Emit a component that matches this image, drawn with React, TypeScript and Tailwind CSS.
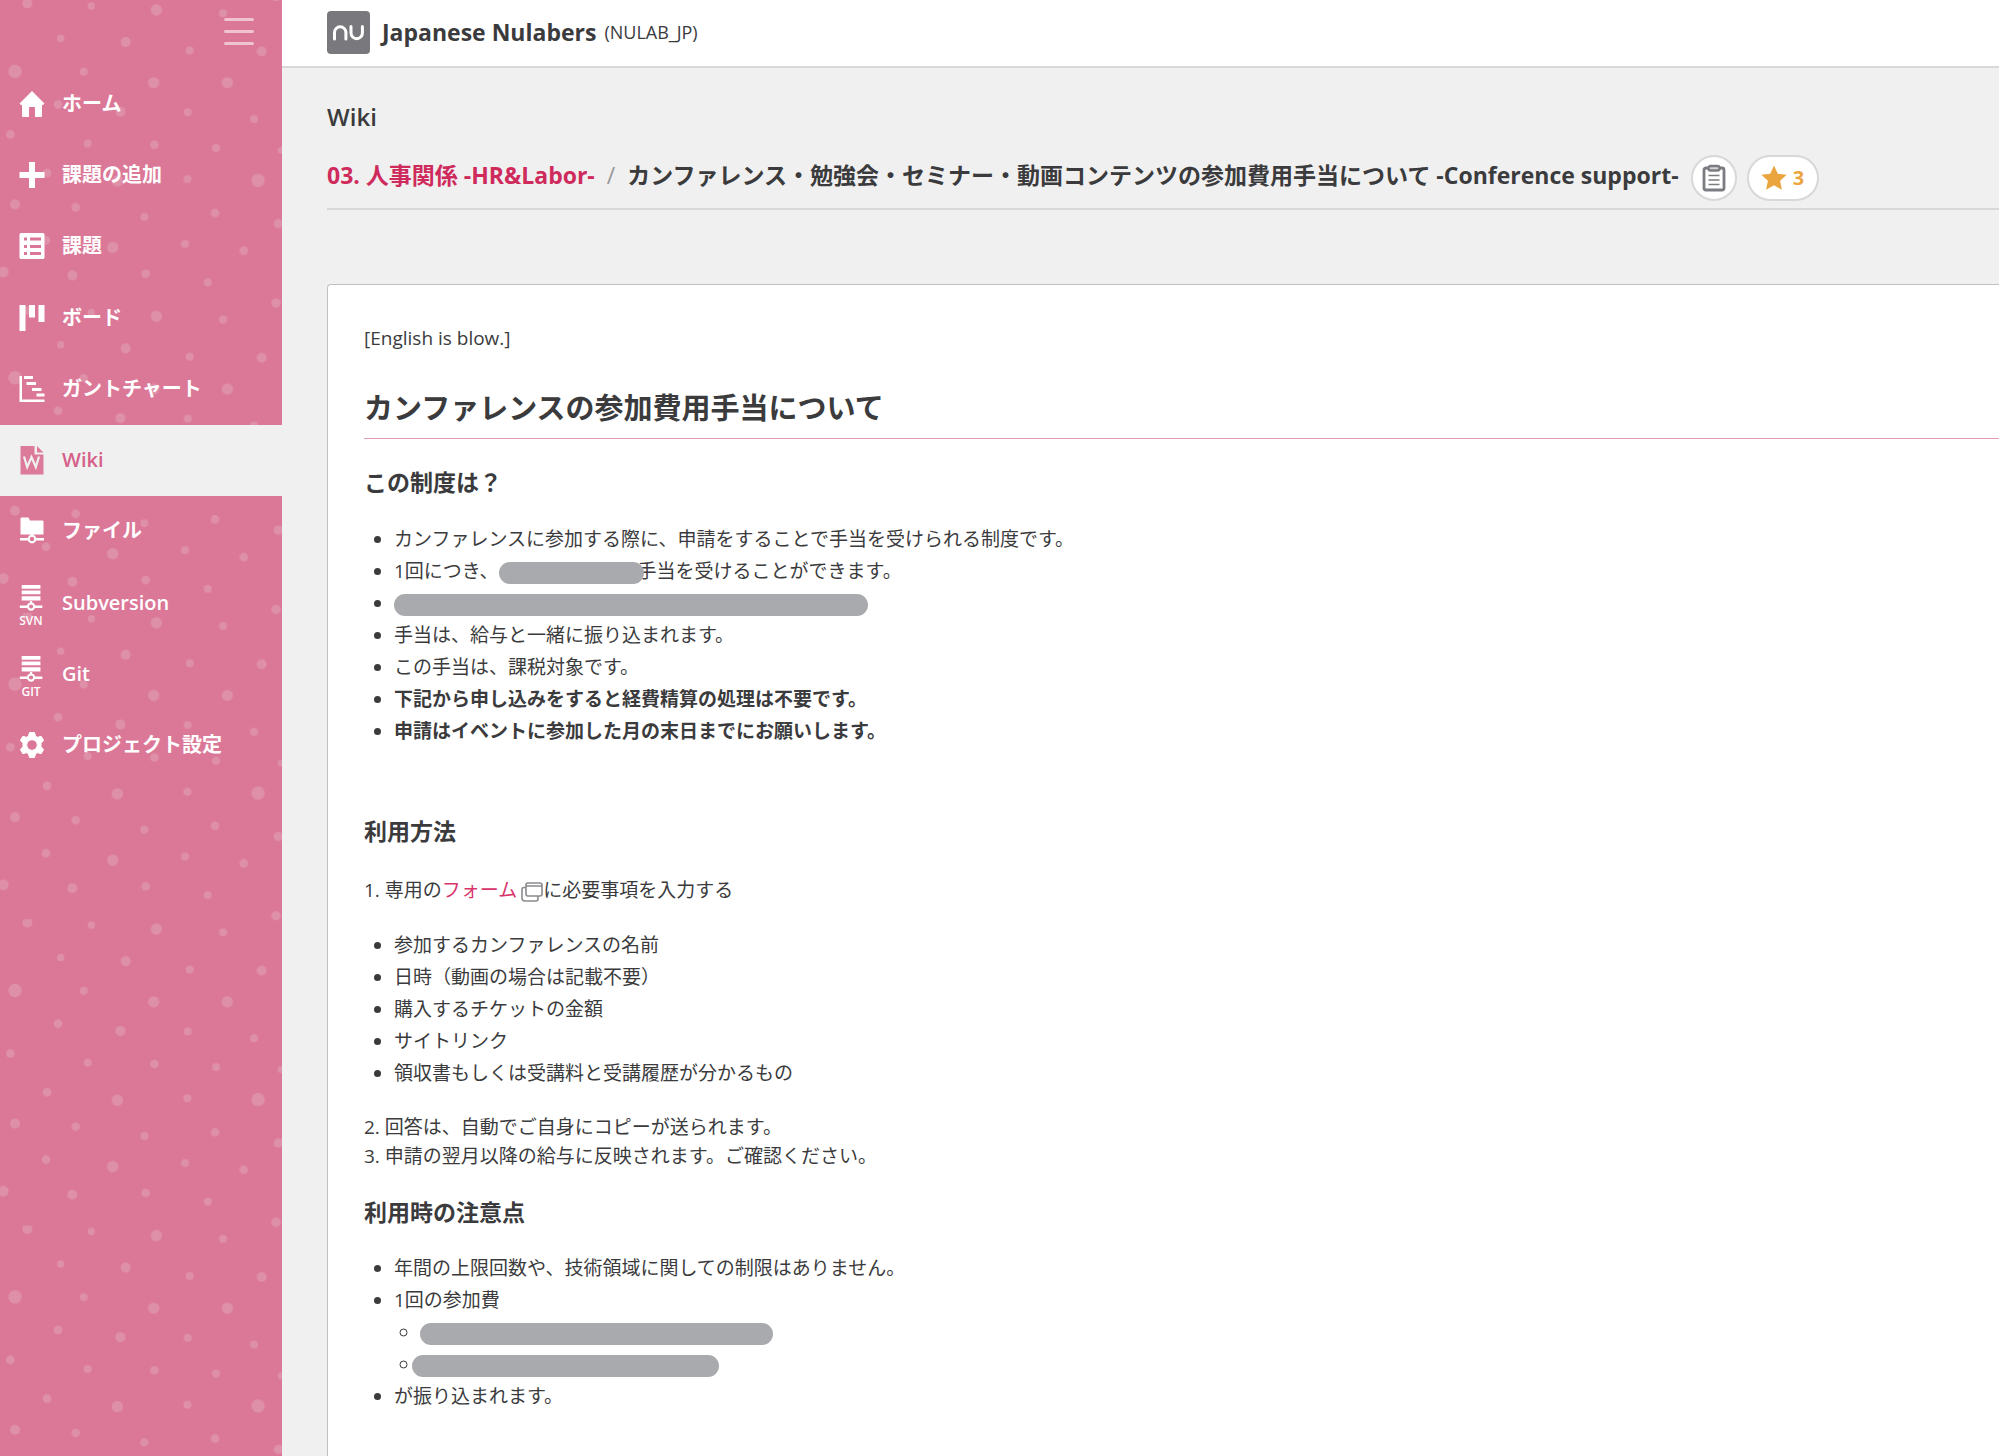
import type { ReactNode } from "react";

const DOTS: [number, number, number][] = [
  [82, 10, 15], [274, 18, 11], [469, 30, 17], [669, 40, 12], [182, 115, 11], [377, 126, 15],
  [569, 151, 12], [785, 154, 15], [45, 214, 20], [251, 215, 12], [461, 248, 17], [682, 248, 17],
  [174, 313, 13], [361, 335, 15], [563, 337, 12], [762, 357, 12], [31, 403, 13], [263, 430, 12],
  [463, 434, 13], [648, 444, 12], [843, 451, 10], [141, 519, 13], [352, 543, 17], [562, 537, 12],
  [774, 541, 20], [45, 613, 15], [227, 622, 13], [433, 650, 12], [645, 639, 13], [835, 671, 14],
  [138, 721, 13], [338, 742, 17], [555, 731, 12], [731, 752, 13], [10, 816, 16], [217, 826, 15],
  [437, 821, 13], [623, 847, 12], [828, 909, 14], [828, -10, 14],
];

function DotBackground() {
  return (
    <svg className="absolute inset-0 h-full w-full" aria-hidden="true">
      <defs>
        <pattern id="dots" width="919" height="919" patternUnits="userSpaceOnUse" patternTransform="scale(0.3334)">
          {DOTS.map(([x, y, r]) => (
            <circle key={`${x}-${y}`} cx={x} cy={y} r={r} fill="#df90a9" />
          ))}
        </pattern>
      </defs>
      <rect width="100%" height="100%" fill="url(#dots)" />
    </svg>
  );
}

function Icon({ children, className = "h-[32px] w-[26px]" }: { children: ReactNode; className?: string }) {
  return (
    <svg viewBox="0 0 26 32" className={className} fill="currentColor" aria-hidden="true">
      {children}
    </svg>
  );
}

const HomeIcon = () => (
  <Icon>
    <path d="M13 3 25.500 15.500 24 17H23V28a1 1 0 0 1-1 1H16V20a1 1 0 0 0-1-1h-4a1 1 0 0 0-1 1v9H4a1 1 0 0 1-1-1V17H2L.5 15.500z" />
  </Icon>
);
const PlusIcon = () => (
  <Icon>
    <path d="M10 3h6v10h9.500v6H16v10h-6V19H.5v-6H10z" />
  </Icon>
);
const ListIcon = () => (
  <Icon>
    <path
      fillRule="evenodd"
      d="M2 3h22a1.500 1.500 0 0 1 1.500 1.500v23A1.500 1.500 0 0 1 24 29H2A1.500 1.500 0 0 1 .5 27.500v-23A1.500 1.500 0 0 1 2 3zM5 7.500v3h3v-3zm6 0v3h11v-3zM5 15v3h3v-3zm6 0v3h11v-3zM5 22v3h3v-3zm6 0v3h11v-3z"
    />
  </Icon>
);
const BoardIcon = () => (
  <Icon>
    <path d="M.5 3h6v26h-6zM10 3h6v12.500h-6zM19.500 3h6v17h-6z" />
  </Icon>
);
const GanttIcon = () => (
  <Icon>
    <path d="M.5 3H3v23.500h22.500V29H.5zM5 3h9v3H5zM7.500 9H17v3H7.500zM13 15h9.500v3H13zM17.500 20.500h8v3h-8z" />
  </Icon>
);
const WikiIcon = () => (
  <Icon>
    <path fill="#dc7a99" d="M1.500 2h14v8.500h9V30.500h-23zM18 2l6.500 6.500H18z" />
    <path d="M5 12.500l3.200 10.500L12.500 13l4.300 10L20 12.500" fill="none" stroke="#f0f0f0" strokeWidth="2.200" />
  </Icon>
);
const Node = () => (
  <>
    <path d="M0 23h8v2.500H0zM16 23h8v2.500h-8zM10.800 18h2.400v3h-2.400z" />
    <circle cx="12" cy="24" r="3.300" fill="none" stroke="currentColor" strokeWidth="2.200" />
  </>
);
const FileIcon = () => (
  <Icon>
    <path d="M1.500 3.500a1 1 0 0 1 1-1h7l1.500 3h12.500a1 1 0 0 1 1 1v13h-23z" />
    <g transform="translate(1 0)">
      <Node />
    </g>
  </Icon>
);
function RepoIcon({ label }: { label: string }) {
  return (
    <span className="flex w-[26px] flex-col items-start pt-1.5">
      <Icon className="h-[30px] w-[26px]">
        <path d="M2 1h20v4H2zM2 7h20v4H2zM2 13h20v4.500H2z" />
        <Node />
      </Icon>
      <span className="w-[24px] text-center text-[12px] font-semibold leading-[14px]">{label}</span>
    </span>
  );
}
const GearIcon = () => (
  <Icon>
    <path
      fillRule="evenodd"
      strokeLinejoin="round"
      stroke="currentColor"
      d="M10.500 3.500h5l1 3.600 2 1.200 3.700-1 2.400 4.200-2.600 2.700v3.600l2.600 2.700-2.400 4.200-3.700-1-2 1.200-1 3.600h-5l-1-3.600-2-1.200-3.700 1-2.400-4.200 2.600-2.700v-3.600l-2.600-2.700 2.400-4.200 3.700 1 2-1.200zM13 10.700a5.300 5.300 0 1 0 0 10.600 5.300 5.300 0 0 0 0-10.600z"
    />
  </Icon>
);

const NAV: { label: string; icon: ReactNode; active?: boolean }[] = [
  { label: "ホーム", icon: <HomeIcon /> },
  { label: "課題の追加", icon: <PlusIcon /> },
  { label: "課題", icon: <ListIcon /> },
  { label: "ボード", icon: <BoardIcon /> },
  { label: "ガントチャート", icon: <GanttIcon /> },
  { label: "Wiki", icon: <WikiIcon />, active: true },
  { label: "ファイル", icon: <FileIcon /> },
  { label: "Subversion", icon: <RepoIcon label="SVN" /> },
  { label: "Git", icon: <RepoIcon label="GIT" /> },
  { label: "プロジェクト設定", icon: <GearIcon /> },
];

function Sidebar() {
  return (
    <aside className="relative w-[282px] shrink-0 bg-[#db7797]">
      <DotBackground />
      <div className="relative">
        <div className="flex h-[68px] justify-end pr-[28px] pt-[18px]">
          <button type="button" aria-label="メニュー" className="flex h-[27px] w-[30px] flex-col justify-between text-[#efc3d0]">
            <span className="h-[3px] w-full rounded bg-current" />
            <span className="h-[3px] w-full rounded bg-current" />
            <span className="h-[3px] w-full rounded bg-current" />
          </button>
        </div>
        <nav className="grid h-[713px] auto-rows-fr">
          {NAV.map((n) => (
            <a
              key={n.label}
              href="#"
              className={
                n.active
                  ? "flex items-center gap-[17px] bg-[#f0f0f0] pl-[19px] text-[20px] font-semibold text-[#d6608a]"
                  : "flex items-center gap-[17px] pl-[19px] text-[20px] font-semibold text-white"
              }
            >
              {n.icon}
              <span>{n.label}</span>
            </a>
          ))}
        </nav>
      </div>
    </aside>
  );
}

function Bar({ className }: { className: string }) {
  return <span className={`relative inline-block h-[22px] rounded-full bg-[#a9aaae] align-middle ${className}`} />;
}

function Bullets({ children }: { children: ReactNode }) {
  return <ul className="list-disc pl-[30px] leading-[32px]">{children}</ul>;
}

function H3({ children }: { children: ReactNode }) {
  return <h3 className="text-[23px] font-bold leading-[32px]">{children}</h3>;
}

export default function App() {
  return (
    <div className="flex h-screen overflow-hidden bg-[#f0f0f0] font-['Open_Sans','Noto_Sans_CJK_JP',sans-serif] text-[19px] text-[#3b3b3d]">
      <Sidebar />
      <div className="flex min-w-0 flex-1 flex-col">
        <header className="flex h-[68px] shrink-0 items-center border-b-2 border-[#d9d7d8] bg-white pb-0.5 pl-[45px]">
          <svg viewBox="0 0 43 43" className="h-[43px] w-[43px]" role="img" aria-label="nu">
            <rect width="43" height="43" rx="4" fill="#79787d" />
            <path
              d="M7.500 28v-6.500a5.700 5.700 0 0 1 11.400 0V28M24 15.500V22a5.700 5.700 0 0 0 11.400 0v-6.500"
              fill="none"
              stroke="#fff"
              strokeWidth="3"
              strokeLinecap="round"
            />
          </svg>
          <span className="ml-3 text-[23px] font-bold">Japanese Nulabers</span>
          <span className="ml-2 text-[18px]">(NULAB_JP)</span>
        </header>
        <main className="flex flex-1 flex-col pl-[45px]">
          <div className="h-[142px] shrink-0 border-b-2 border-[#d9d7d8] pt-[33px]">
            <h1 className="text-[24px] font-semibold leading-[32px]">Wiki</h1>
            <div className="mt-[22px] flex h-[46px] items-center text-[23px] font-bold">
              <div className="flex items-center pb-1.5">
                <a href="#" className="text-[#cf2a5c]">
                  03. 人事関係 -HR&amp;Labor-
                </a>
                <span className="mx-3 font-normal text-[#999]">/</span>
                <h2>カンファレンス・勉強会・セミナー・動画コンテンツの参加費用手当について -Conference support-</h2>
              </div>
              <button
                type="button"
                aria-label="コピー"
                className="ml-3 flex h-[46px] w-[46px] items-center justify-center rounded-full border-2 border-[#d9d7d8] bg-white"
              >
                <svg viewBox="0 0 24 28" className="h-[28px] w-[24px]" fill="none" stroke="#7b7c81" strokeWidth="2.800">
                  <rect x="2" y="4" width="20" height="22" rx="2" />
                  <rect x="6.500" y="2" width="11" height="4.500" rx="2" fill="#d5d5d7" strokeWidth="2.400" />
                  <path d="M6.500 11.500h11M6.500 16h11M6.500 20.500h11" strokeWidth="1.500" />
                </svg>
              </button>
              <button
                type="button"
                className="ml-2.5 flex h-[46px] w-[72px] items-center justify-center gap-1.5 rounded-full border-2 border-[#d9d7d8] bg-white text-[20px] text-[#eba53f]"
              >
                <svg viewBox="0 0 26 26" className="h-[26px] w-[26px]" fill="currentColor" aria-hidden="true">
                  <path d="M13 .5l3.800 8.200 8.900 1-6.600 6.100 1.800 8.900L13 20.300l-7.900 4.400 1.800-8.900L.3 9.700l8.900-1z" />
                </svg>
                3
              </button>
            </div>
          </div>
          <article className="mt-[74px] flex-1 rounded-tl border-l border-t border-[#c0bfc1] bg-white pl-[36px] pt-[37px]">
            <p className="leading-[32px]">[English is blow.]</p>
            <h2 className="mt-[18px] h-[67px] border-b border-[#e39bb1] pt-4 text-[29px] font-bold leading-[40px]">
              カンファレンスの参加費用手当について
            </h2>
            <div className="mt-[27px]">
              <H3>この制度は？</H3>
            </div>
            <div className="mt-[25px]">
              <Bullets>
                <li>カンファレンスに参加する際に、申請をすることで手当を受けられる制度です。</li>
                <li>
                  1回につき、
                  <Bar className="-mr-1.5 w-[145px]" />
                  手当を受けることができます。
                </li>
                <li>
                  <Bar className="w-[474px]" />
                </li>
                <li>手当は、給与と一緒に振り込まれます。</li>
                <li>この手当は、課税対象です。</li>
                <li className="font-bold">下記から申し込みをすると経費精算の処理は不要です。</li>
                <li className="font-bold">申請はイベントに参加した月の末日までにお願いします。</li>
              </Bullets>
            </div>
            <div className="mt-[68px]">
              <H3>利用方法</H3>
            </div>
            <p className="mt-[27px] leading-[32px]">
              1. 専用の
              <a href="#" className="text-[#d8336a]">
                フォーム
              </a>
              <svg viewBox="0 0 22 20" className="ml-1 inline h-[20px] w-[22px]" fill="none" stroke="#8b8b8f" strokeWidth="1.600" aria-hidden="true">
                <rect x="5" y="1" width="16" height="13" rx="2" />
                <path d="M5 5.500H3a2 2 0 0 0-2 2V16a3 3 0 0 0 3 3h11a2 2 0 0 0 2-2v-3M5 4h16" />
              </svg>
              に必要事項を入力する
            </p>
            <div className="mt-[23px]">
              <Bullets>
                <li>参加するカンファレンスの名前</li>
                <li>日時（動画の場合は記載不要）</li>
                <li>購入するチケットの金額</li>
                <li>サイトリンク</li>
                <li>領収書もしくは受講料と受講履歴が分かるもの</li>
              </Bullets>
            </div>
            <p className="mt-[24px] leading-[29px]">
              2. 回答は、自動でご自身にコピーが送られます。
              <br />
              3. 申請の翌月以降の給与に反映されます。ご確認ください。
            </p>
            <div className="mt-[25px]">
              <H3>利用時の注意点</H3>
            </div>
            <div className="mt-[24px]">
              <Bullets>
                <li>年間の上限回数や、技術領域に関しての制限はありません。</li>
                <li>
                  1回の参加費
                  <ul className="list-[circle] pl-[26px]">
                    <li>
                      <Bar className="w-[353px]" />
                    </li>
                    <li>
                      <Bar className="-ml-2 w-[307px]" />
                    </li>
                  </ul>
                </li>
                <li>が振り込まれます。</li>
              </Bullets>
            </div>
          </article>
        </main>
      </div>
    </div>
  );
}
